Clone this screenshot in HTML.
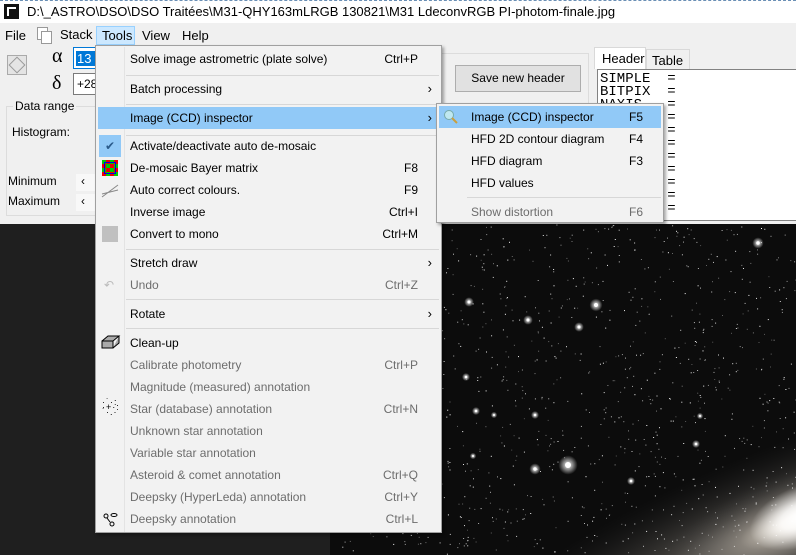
<!DOCTYPE html>
<html style="overflow:hidden"><head><meta charset="utf-8"><style>
*{margin:0;padding:0;box-sizing:border-box}
body{width:796px;height:555px;overflow:hidden;background:#1f1f1f;font-family:"Liberation Sans",sans-serif;font-size:12px;color:#000;position:relative}
.a{position:absolute;white-space:nowrap}
#top{position:absolute;left:0;top:0;width:796px;height:224px;background:#f0f0f0;overflow:hidden}
#title{position:absolute;left:0;top:0;width:796px;height:23px;background:#fff;border-top:1px dashed #6a8fb5}
.menu{position:absolute;background:#f2f2f2;border:1px solid #a0a0a0;box-shadow:2px 2px 3px rgba(0,0,0,.35)}
.it{position:absolute;left:2px;right:2px;height:22px;line-height:22px}
.it .t{position:absolute;left:32px}
.it .k{position:absolute;right:21px}
.it .r{position:absolute;right:7px;font-size:13px}
.dis{color:#6d6d6d}
.hl{background:#91c9f7}
.sep{position:absolute;left:30px;right:2px;height:1px;background:#d7d7d7}
.mono{font-family:"Liberation Mono",monospace;font-size:14px;line-height:13px;white-space:pre}
</style></head><body>
<svg id="sky" class="a" style="left:330px;top:224px" width="466" height="331"></svg>
<div id="top">
 <div id="title">
  <div class="a" style="left:4px;top:3px;width:15px;height:15px;background:#111"><div class="a" style="left:3px;top:3px;width:9px;height:9px;background:#fff"></div><div class="a" style="left:5px;top:5px;width:7px;height:7px;background:#111"></div></div>
  <div class="a" style="left:27px;top:3px;font-size:13px">D:\_ASTRO\DSO\DSO Traitées\M31-QHY163mLRGB 130821\M31 LdeconvRGB PI-photom-finale.jpg</div>
 </div>
 <div class="a" style="left:5px;top:28px;font-size:13px">File</div>
 <div class="a" style="left:37px;top:27px;width:11px;height:13px;border:1px solid #999;background:#fff"></div>
 <div class="a" style="left:41px;top:31px;width:11px;height:13px;border:1px solid #999;background:#fff"></div>
 <div class="a" style="left:60px;top:27px;font-size:13px">Stack</div>
 <div class="a" style="left:96px;top:26px;width:39px;height:19px;background:#cce8ff;border:1px solid #99d1ff"></div>
 <div class="a" style="left:102px;top:28px;font-size:13px">Tools</div>
 <div class="a" style="left:142px;top:28px;font-size:13px">View</div>
 <div class="a" style="left:182px;top:28px;font-size:13px">Help</div>
 <div class="a" style="left:7px;top:55px;width:20px;height:20px;border:1px solid #aaa;background:#e4e4e4"><div class="a" style="left:3px;top:3px;width:12px;height:12px;border:1px solid #999;transform:rotate(45deg)"></div></div>
 <div class="a" style="left:52px;top:45px;font-size:20px;font-family:'Liberation Serif',serif">α</div>
 <div class="a" style="left:73px;top:47px;width:40px;height:22px;border:1px solid #0078d7;background:#fff"><div class="a" style="left:2px;top:3px;background:#0078d7;color:#fff;font-size:13px;padding:0 1px">13 4</div></div>
 <div class="a" style="left:52px;top:72px;font-size:20px;font-family:'Liberation Serif',serif">δ</div>
 <div class="a" style="left:73px;top:73px;width:40px;height:22px;border:1px solid #7a7a7a;background:#fff"><div class="a" style="left:3px;top:3px;font-size:12px">+28</div></div>
 <div class="a" style="left:6px;top:106px;width:100px;height:110px;border:1px solid #dcdcdc"></div>
 <div class="a" style="left:13px;top:99px;background:#f0f0f0;padding:0 2px">Data range</div>
 <div class="a" style="left:12px;top:125px">Histogram:</div>
 <div class="a" style="left:8px;top:174px">Minimum</div>
 <div class="a" style="left:8px;top:194px">Maximum</div>
 <div class="a" style="left:76px;top:174px;width:20px;height:17px;background:#f8f8f8;padding-left:5px">‹</div>
 <div class="a" style="left:76px;top:194px;width:20px;height:17px;background:#f8f8f8;padding-left:5px">‹</div>
 <div class="a" style="left:441px;top:53px;width:148px;height:102px;border:1px solid #dcdcdc"></div>
 <div class="a" style="left:455px;top:65px;width:126px;height:27px;border:1px solid #adadad;background:#e1e1e1;text-align:center;line-height:25px">Save new header</div>
 <div class="a" style="left:594px;top:47px;width:52px;height:22px;background:#fff;border:1px solid #d9d9d9;border-bottom:none;padding:3px 0 0 7px;font-size:13px">Header</div>
 <div class="a" style="left:646px;top:49px;width:44px;height:20px;border:1px solid #d9d9d9;border-bottom:none;padding:3px 0 0 5px;font-size:13px">Table</div>
 <div class="a" style="left:597px;top:69px;width:210px;height:152px;background:#fff;border:1px solid #828282"></div>
 <div class="a mono" style="left:600px;top:73px">SIMPLE  =
BITPIX  =
NAXIS   =
        =
        =
        =
        =
        =
        =
        =
        =</div>
</div>
<!-- main menu -->
<div class="menu" style="left:95px;top:45px;width:347px;height:488px">
 <div class="a" style="left:28px;top:1px;width:1px;height:485px;background:#e3e3e3"></div>
 <div class="it" style="top:2px"><span class="t">Solve image astrometric (plate solve)</span><span class="k">Ctrl+P</span></div>
 <div class="sep" style="top:29px"></div>
 <div class="it" style="top:32px"><span class="t">Batch processing</span><span class="r">›</span></div>
 <div class="sep" style="top:58px"></div>
 <div class="it hl" style="top:61px"><span class="t">Image (CCD) inspector</span><span class="r">›</span></div>
 <div class="sep" style="top:89px"></div>
 <div class="a" style="left:3px;top:89px;width:22px;height:22px;background:#91c9f7;text-align:center;line-height:22px;color:#2a5a8a">✔</div>
 <div class="it" style="top:89px"><span class="t">Activate/deactivate auto de-mosaic</span></div>
 <div class="a" style="left:6px;top:114px;width:16px;height:16px;background:repeating-conic-gradient(#e00 0 25%,#0c0 0 50%) 0 0/8px 8px;outline:1px solid #00d;outline-offset:-3px"></div>
 <div class="it" style="top:111px"><span class="t">De-mosaic Bayer matrix</span><span class="k">F8</span></div>
 <svg class="a" style="left:5px;top:137px" width="18" height="16"><path d="M1 14L17 2M1 11L17 7" stroke="#888" fill="none"/></svg>
 <div class="it" style="top:133px"><span class="t">Auto correct colours.</span><span class="k">F9</span></div>
 <div class="it" style="top:155px"><span class="t">Inverse image</span><span class="k">Ctrl+I</span></div>
 <div class="a" style="left:6px;top:180px;width:16px;height:16px;background:#c0c0c0"></div>
 <div class="it" style="top:177px"><span class="t">Convert to mono</span><span class="k">Ctrl+M</span></div>
 <div class="sep" style="top:203px"></div>
 <div class="it" style="top:206px"><span class="t">Stretch draw</span><span class="r">›</span></div>
 <div class="a dis" style="left:8px;top:232px;font-size:12px;color:#bbb">↶</div>
 <div class="it dis" style="top:228px"><span class="t">Undo</span><span class="k">Ctrl+Z</span></div>
 <div class="sep" style="top:253px"></div>
 <div class="it" style="top:257px"><span class="t">Rotate</span><span class="r">›</span></div>
 <div class="sep" style="top:282px"></div>
 <svg class="a" style="left:5px;top:288px" width="20" height="16"><path d="M1 7h11v7H1zM1 7l6-5h11l-6 5M12 14l6-5V2" stroke="#000" fill="#aaa"/></svg>
 <div class="it" style="top:286px"><span class="t">Clean-up</span></div>
 <div class="it dis" style="top:308px"><span class="t">Calibrate photometry</span><span class="k">Ctrl+P</span></div>
 <div class="it dis" style="top:330px"><span class="t">Magnitude (measured) annotation</span></div>
 <div class="a" style="left:6px;top:354px;font-size:9px;line-height:5px;letter-spacing:1px">·˙·:<br>·+·:<br>˙·.·</div>
 <div class="it dis" style="top:352px"><span class="t">Star (database) annotation</span><span class="k">Ctrl+N</span></div>
 <div class="it dis" style="top:374px"><span class="t">Unknown star annotation</span></div>
 <div class="it dis" style="top:396px"><span class="t">Variable star annotation</span></div>
 <div class="it dis" style="top:418px"><span class="t">Asteroid &amp; comet annotation</span><span class="k">Ctrl+Q</span></div>
 <div class="it dis" style="top:440px"><span class="t">Deepsky (HyperLeda) annotation</span><span class="k">Ctrl+Y</span></div>
 <svg class="a" style="left:6px;top:466px" width="18" height="16"><circle cx="4" cy="4" r="2" fill="none" stroke="#000"/><ellipse cx="12" cy="3" rx="3" ry="1.5" fill="none" stroke="#000"/><circle cx="10" cy="12" r="2" fill="none" stroke="#000"/><path d="M5 6l3 4" stroke="#000"/></svg>
 <div class="it dis" style="top:462px"><span class="t">Deepsky annotation</span><span class="k">Ctrl+L</span></div>
</div>
<!-- submenu -->
<div class="menu" style="left:436px;top:103px;width:228px;height:120px">
 <div class="it hl" style="top:2px"><span class="t" style="left:32px">Image (CCD) inspector</span><span class="a" style="left:190px">F5</span></div>
 <svg class="a" style="left:6px;top:5px" width="16" height="16"><circle cx="6" cy="6" r="4.5" fill="#bfe8f0" stroke="#7aa"/><path d="M9 9l5 5" stroke="#c9a040" stroke-width="2"/></svg>
 <div class="it" style="top:24px"><span class="t">HFD 2D contour diagram</span><span class="a" style="left:190px">F4</span></div>
 <div class="it" style="top:46px"><span class="t">HFD diagram</span><span class="a" style="left:190px">F3</span></div>
 <div class="it" style="top:68px"><span class="t">HFD values</span></div>
 <div class="sep" style="top:93px"></div>
 <div class="it dis" style="top:97px"><span class="t">Show distortion</span><span class="a" style="left:190px">F6</span></div>
</div>
<script>
(function(){
var s=document.getElementById('sky'),h='<defs><radialGradient id="g" cx="0.5" cy="0.5" r="0.5"><stop offset="0" stop-color="#fffaf0"/><stop offset="0.12" stop-color="#f4ebdd"/><stop offset="0.4" stop-color="#8a847c" stop-opacity="0.75"/><stop offset="1" stop-color="#333" stop-opacity="0"/></radialGradient><radialGradient id="b"><stop offset="0" stop-color="#fff"/><stop offset="1" stop-color="#fff" stop-opacity="0"/></radialGradient><radialGradient id="c"><stop offset="0" stop-color="#fff"/><stop offset="0.4" stop-color="#fff" stop-opacity="0.8"/><stop offset="1" stop-color="#fff" stop-opacity="0"/></radialGradient></defs><rect width="466" height="331" fill="#0c0c0c"/>';
h+='<ellipse cx="460" cy="305" rx="360" ry="85" fill="url(#g)" opacity="0.55" transform="rotate(-22 460 305)"/>';
h+='<ellipse cx="470" cy="295" rx="160" ry="50" fill="url(#g)" opacity="0.9" transform="rotate(-22 470 295)"/>';
h+='<ellipse cx="472" cy="292" rx="55" ry="30" fill="url(#c)" transform="rotate(-22 472 292)"/>';
var x=12345;function r(){x=(x*1103515245+12345)%2147483648;return x/2147483648;}
for(var i=0;i<1100;i++){var px=r()*466,py=r()*331,o=0.3+r()*0.7;h+='<rect x="'+px.toFixed(1)+'" y="'+py.toFixed(1)+'" width="1" height="1" fill="#fff" opacity="'+o.toFixed(2)+'"/>';}
var list=[[568-330,465-224,6],[596-330,305-224,4],[579-330,327-224,3],[469-330,302-224,3],[528-330,320-224,3],[535-330,469-224,3.5],[758-330,243-224,3.5],[535-330,415-224,2.5],[466-330,377-224,2.5],[476-330,411-224,2.5],[494-330,415-224,2],[473-330,456-224,2],[696-330,444-224,2.5],[631-330,481-224,2.5],[700-330,416-224,2]];
list.forEach(function(p){h+='<circle cx="'+p[0]+'" cy="'+p[1]+'" r="'+(p[2]*1.6)+'" fill="url(#b)"/><circle cx="'+p[0]+'" cy="'+p[1]+'" r="'+(p[2]*0.5)+'" fill="#fff"/>';});
s.innerHTML=h;})();
</script>
</body></html>
